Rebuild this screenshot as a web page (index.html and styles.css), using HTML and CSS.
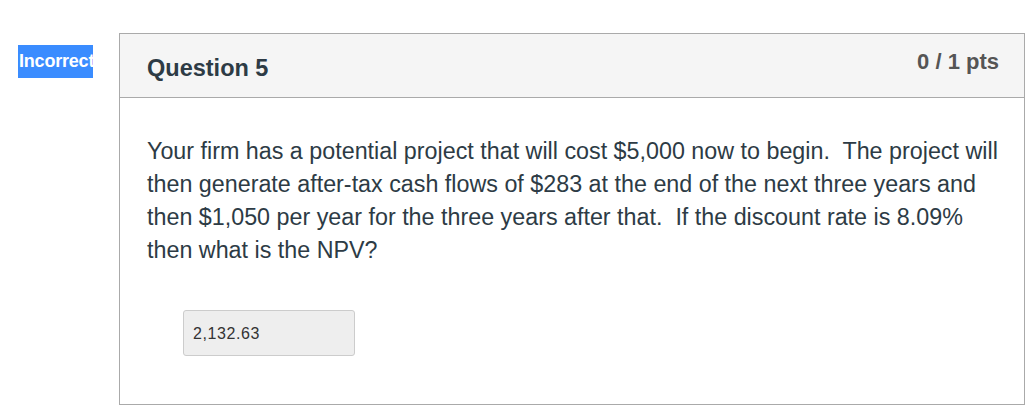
FILE: index.html
```html
<!DOCTYPE html>
<html>
<head>
<meta charset="utf-8">
<link rel="stylesheet" href="styles.css">
</head>
<body>
<div class="page">
  <div class="status"><span class="badge">Incorrect</span></div>
  <div class="card">
    <div class="card-header">
      <h2 class="title">Question 5</h2>
      <div class="points">0 / 1 pts</div>
    </div>
    <div class="card-body">
      <p class="question">Your firm has a potential project that will cost $5,000 now to begin.&nbsp; The project will then generate after-tax cash flows of $283 at the end of the next three years and then $1,050 per year for the three years after that.&nbsp; If the discount rate is 8.09% then what is the NPV?</p>
      <div class="answer-row">
        <div class="answer">2,132.63</div>
      </div>
    </div>
  </div>
</div>
</body>
</html>
```

FILE: styles.css
```css
html, body {
  margin: 0;
  padding: 0;
  background: #ffffff;
}
body {
  font-family: "Liberation Sans", Arial, sans-serif;
  color: #2d3b45;
}
.page {
  display: flex;
  align-items: flex-start;
  padding-top: 33px;
  padding-left: 18px;
}
.status {
  width: 101px;
  flex: none;
  padding-top: 12px;
}
.badge {
  display: block;
  width: 75px;
  height: 33px;
  overflow: hidden;
  white-space: nowrap;
  padding-left: 1px;
  box-sizing: border-box;
  background: #3a8cff;
  color: #ffffff;
  font-weight: bold;
  font-size: 18px;
  line-height: 32px;
  letter-spacing: -0.2px;
}
.card {
  width: 904px;
  border: 1px solid #aaaaaa;
  flex: none;
}
.card-header {
  display: flex;
  justify-content: space-between;
  align-items: flex-start;
  background: #f5f5f5;
  border-bottom: 1px solid #aaaaaa;
  height: 63px;
  padding: 0 25px 0 27px;
}
.title {
  margin: 0;
  padding-top: 21px;
  font-size: 23.5px;
  font-weight: bold;
  line-height: 26px;
  color: #2d3b45;
}
.points {
  padding-top: 16px;
  font-size: 22px;
  font-weight: bold;
  line-height: 24px;
  color: #555555;
}
.card-body {
  padding: 37px 15px 48px 27px;
}
.question {
  margin: 0;
  font-size: 23.3px;
  line-height: 33px;
  color: #2d3b45;
}
.answer-row {
  padding-top: 43px;
  padding-left: 36px;
}
.answer {
  width: 161px;
  height: 44px;
  box-sizing: content-box;
  padding: 0 0 0 9px;
  background: #eeeeee;
  border: 1px solid #cccccc;
  border-radius: 3px;
  font-size: 16px;
  line-height: 46px;
  letter-spacing: 0.6px;
  color: #333333;
}
```
